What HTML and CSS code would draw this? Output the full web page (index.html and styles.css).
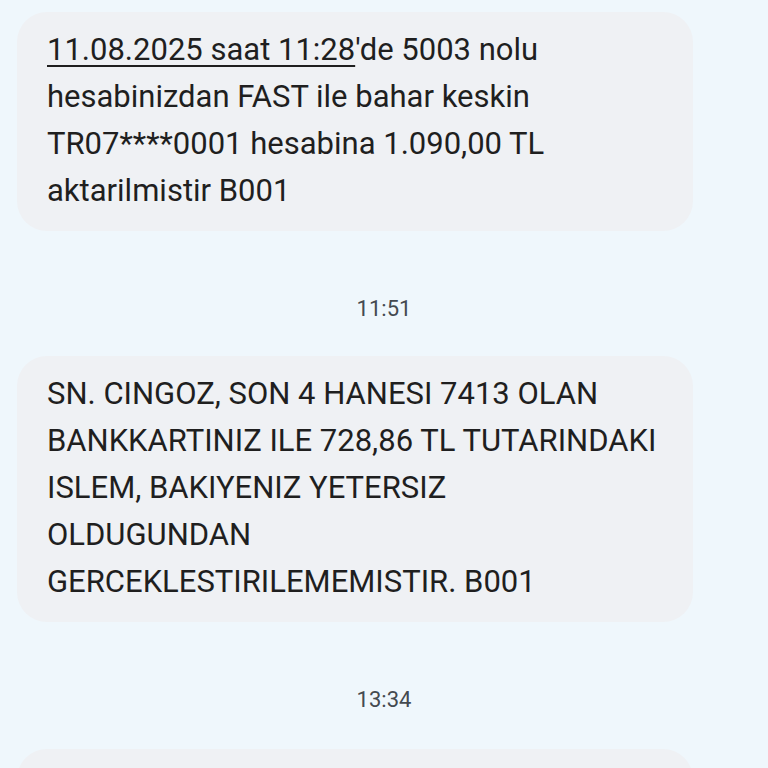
FILE: index.html
```html
<!DOCTYPE html>
<html lang="tr">
<head>
<meta charset="utf-8">
<link rel="stylesheet" href="styles.css">
</head>
<body>
<div class="thread">
  <div class="bubble first">
    <p class="msg"><span class="link">11.08.2025 saat 11:28</span>'de 5003 nolu hesabinizdan FAST ile bahar keskin TR07****0001 hesabina 1.090,00 TL aktarilmistir B001</p>
  </div>
  <div class="time">11:51</div>
  <div class="bubble">
    <p class="msg">SN. CINGOZ, SON 4 HANESI 7413 OLAN BANKKARTINIZ ILE 728,86 TL TUTARINDAKI ISLEM, BAKIYENIZ YETERSIZ<br>OLDUGUNDAN GERCEKLESTIRILEMEMISTIR. B001</p>
  </div>
  <div class="time">13:34</div>
  <div class="bubble last"></div>
</div>
</body>
</html>
```

FILE: styles.css
```css
html, body {
  margin: 0;
  padding: 0;
  background: #eff7fc;
  overflow: hidden;
}
.thread {
  display: flex;
  flex-direction: column;
  padding: 12px 0 0 0;
  font-family: Roboto, "Noto Sans", sans-serif;
}
.bubble {
  width: 676px;
  margin-left: 17px;
  box-sizing: border-box;
  background: #eff1f4;
  border-radius: 30px;
  padding: 14px 30px 17px 30px;
}
.msg {
  margin: 0;
  font-size: 31px;
  line-height: 47px;
  color: #1f1f1f;
}
.link {
  text-decoration: underline;
  text-decoration-thickness: 2px;
  text-underline-offset: 5px;
}
.time {
  text-align: center;
  font-family: "Liberation Sans Narrow", "Roboto", sans-serif;
  font-size: 22px;
  line-height: 24px;
  color: #444a50;
  margin: 66px 0 35px 0;
}
.bubble.last {
  height: 60px;
  margin-top: 2px;
}
```
